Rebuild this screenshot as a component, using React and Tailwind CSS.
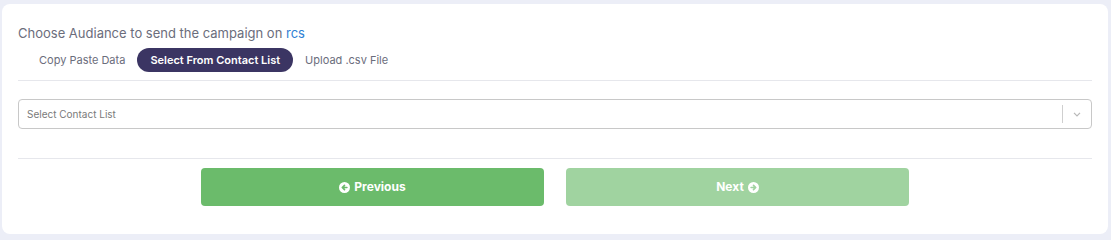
import React from "react";

const CircleArrow = ({ dir = "left", color }) => (
  <svg width="11" height="11" viewBox="0 0 16 16" className="inline-block">
    <circle cx="8" cy="8" r="8" fill="white" />
    {dir === "left" ? (
      <path d="M11.5 8H5M8 4.8L4.8 8 8 11.2" stroke={color} strokeWidth="2.4" fill="none" strokeLinecap="round" strokeLinejoin="round" />
    ) : (
      <path d="M4.5 8H11M8 4.8L11.2 8 8 11.2" stroke={color} strokeWidth="2.4" fill="none" strokeLinecap="round" strokeLinejoin="round" />
    )}
  </svg>
);

const App = () => {
  return (
    <div
      className="h-[240px] w-[1111px] bg-[#eceef7] pl-[2px] pr-[3px] pt-[4px] pb-[6px]"
      style={{ fontFamily: "Inter, 'Noto Sans', sans-serif" }}
    >
      <div className="h-[230px] bg-white rounded-lg px-4 pt-[19px]">
        {/* title */}
        <p className="text-[13px] leading-[20px] text-[#6b6d7c]">
          Choose Audiance to send the campaign on <span className="text-[#2f7fd4]">rcs</span>
        </p>

        {/* tabs */}
        <div className="flex items-center mt-[5px] pl-[9px]">
          <button className="h-6 px-3 text-[11px] text-[#6b6d7c]">Copy Paste Data</button>
          <button className="h-6 px-[13px] rounded-full bg-[#3b3563] text-white text-[11px] font-semibold">
            Select From Contact List
          </button>
          <button className="h-6 px-3 text-[11px] text-[#6b6d7c]">Upload .csv File</button>
        </div>

        <div className="mt-2 border-t border-[#e6e7ec]"></div>

        {/* select */}
        <div className="mt-[18px] h-[30px] border border-[#c8c8c8] rounded flex items-center">
          <span className="flex-1 pl-2 text-[10px] text-[#7a7a7a]">Select Contact List</span>
          <span className="w-px h-[18px] bg-[#cfcfcf]"></span>
          <span className="w-[28px] flex justify-center">
            <svg width="12" height="12" viewBox="0 0 20 20">
              <path d="M5 8l5 5 5-5" stroke="#b8b8b8" strokeWidth="2" fill="none" />
            </svg>
          </span>
        </div>

        <div className="mt-[29px] border-t border-[#e6e7ec]"></div>

        {/* nav buttons */}
        <div className="mt-[9px] flex justify-center gap-[22px]">
          <button className="w-[343px] h-[38px] rounded bg-[#6bbb6b] text-white text-[12px] font-bold flex items-center justify-center gap-1">
            <CircleArrow dir="left" color="#6bbb6b" />
            Previous
          </button>
          <button className="w-[343px] h-[38px] rounded bg-[#a0d3a0] text-white text-[12px] font-bold flex items-center justify-center gap-1">
            Next
            <CircleArrow dir="right" color="#a0d3a0" />
          </button>
        </div>
      </div>
    </div>
  );
};

export default App;
